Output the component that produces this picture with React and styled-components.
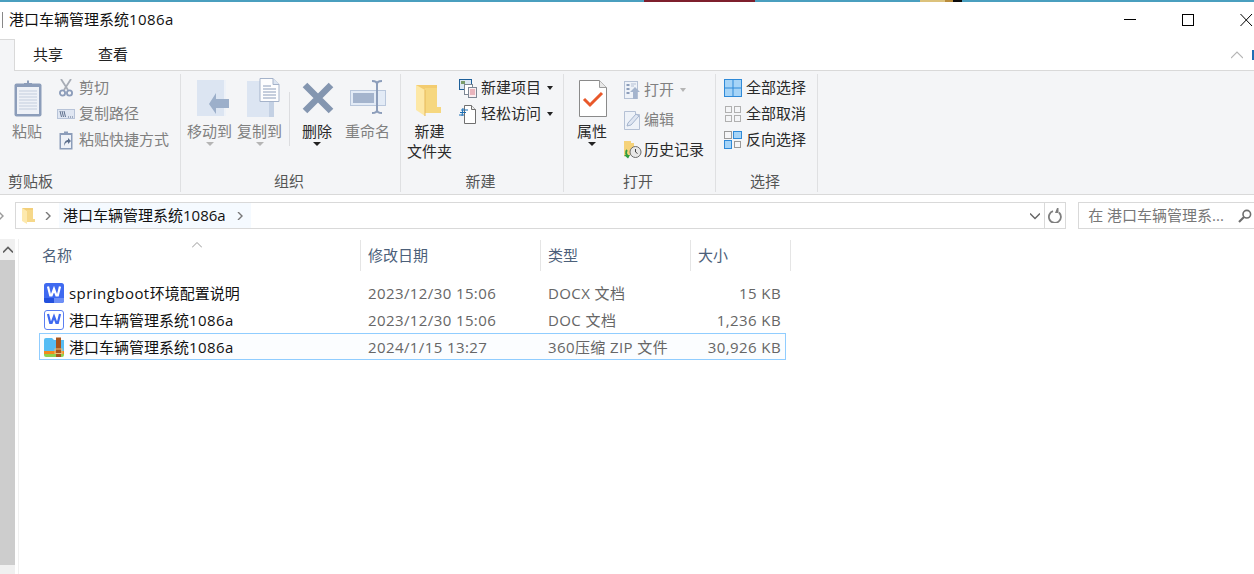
import React from "react";
import styled, { createGlobalStyle } from "styled-components";

const GlobalStyle = createGlobalStyle`
  html, body {
    margin: 0;
    padding: 0;
    background: #fff;
    overflow: hidden;
  }
  * {
    box-sizing: border-box;
  }
  svg {
    display: block;
    flex-shrink: 0;
  }
`;

const Window = styled.div`
  width: 1254px;
  height: 574px;
  overflow: hidden;
  background: #fff;
  font-family: "Open Sans", "Noto Sans CJK SC", sans-serif;
  font-size: 15px;
  color: #1a1a1a;
`;

const TopStrip = styled.div`
  display: flex;
  height: 2px;
`;

const StripSegment = styled.div`
  width: ${p => p.$width}px;
  flex-grow: ${p => (p.$grow ? 1 : 0)};
  background: ${p => p.$color};
`;

const TitleBar = styled.div`
  display: flex;
  align-items: center;
  justify-content: space-between;
  height: 36px;
  padding-left: 2px;
`;

const TitleLeft = styled.div`
  display: flex;
  align-items: center;
  gap: 7px;
`;

const TitleTick = styled.div`
  width: 1px;
  height: 16px;
  background: #888;
`;

const Title = styled.div`
  margin-top: -3px;
  margin-left: -1px;
  font-size: 15px;
  color: #111;
`;

const LatinRun = styled.span`
  letter-spacing: 0.45px;
`;

const WindowControls = styled.div`
  display: flex;
  align-items: center;
  gap: 46px;
  padding-right: 1px;
`;

const TabRow = styled.div`
  display: flex;
  align-items: flex-end;
  height: 33px;
  border-bottom: 1px solid #d9d9d9;
`;

const HomeTab = styled.div`
  width: 15px;
  height: 32px;
  margin-bottom: -1px;
  background: #f4f5f7;
  border-top: 1px solid #d9d9d9;
  border-right: 1px solid #d9d9d9;
`;

const Tab = styled.div`
  width: ${p => p.$width}px;
  height: 31px;
  line-height: 31px;
  padding-left: ${p => p.$pad}px;
  font-size: 15px;
  color: #222;
`;

const TabSpacer = styled.div`
  flex: 1;
  display: flex;
  align-items: center;
  justify-content: flex-end;
  height: 31px;
  gap: 9px;
`;

const HelpSliver = styled.div`
  width: 2px;
  height: 10px;
  background: #1f6fb5;
`;

const Ribbon = styled.div`
  display: flex;
  height: 124px;
  padding: 3px 0 2px;
  background: #f4f5f7;
  border-bottom: 1px solid #d9d9d9;
`;

const Group = styled.div`
  display: flex;
  flex-direction: column;
  width: ${p => p.$width}px;
  height: 118px;
  border-right: 1px solid #dfe0e2;
`;

const GroupBody = styled.div`
  flex: 1;
  display: flex;
  align-items: flex-start;
  padding-left: ${p => p.$pad}px;
  gap: ${p => p.$gap || 0}px;
`;

const GroupLabel = styled.div`
  height: 22px;
  line-height: 22px;
  padding-left: ${p => (p.$left ? 8 : 0)}px;
  padding-right: ${p => (p.$left ? 0 : 3)}px;
  text-align: ${p => (p.$left ? "left" : "center")};
  font-size: 15px;
  color: #555;
`;

const BigButton = styled.div`
  display: flex;
  flex-direction: column;
  align-items: center;
  width: ${p => p.$width}px;
  margin-right: ${p => p.$after || 0}px;
  color: ${p => (p.$off ? "#808080" : "#2a2a2a")};
  font-size: 15px;
  line-height: 20px;
  white-space: nowrap;
  text-align: center;
`;

const BigIcon = styled.div`
  display: flex;
  align-items: flex-start;
  justify-content: center;
  height: 47px;
  padding-top: ${p => p.$top || 0}px;
  margin-left: ${p => p.$shift || 0}px;
`;

const Caret = styled.div`
  width: 0;
  height: 0;
  margin-top: 1px;
  border-left: 4px solid transparent;
  border-right: 4px solid transparent;
  border-top: 4px solid ${p => (p.$off ? "#b5b5b5" : "#222")};
`;

const RibbonDivider = styled.div`
  width: 1px;
  height: 54px;
  margin: 18px 12px 0 7px;
  background: #dcdde0;
`;

const SmallStack = styled.div`
  display: flex;
  flex-direction: column;
  padding-top: 1px;
`;

const SmallAction = styled.div`
  display: flex;
  align-items: center;
  height: ${p => p.$height}px;
  font-size: 15px;
  white-space: nowrap;
  color: ${p => (p.$off ? "#808080" : "#2a2a2a")};
`;

const SmallLabel = styled.span`
  margin-top: -3px;
`;

const SmallIcon = styled.div`
  display: flex;
  align-items: center;
  width: ${p => p.$width}px;
  padding-left: ${p => p.$inset || 0}px;
`;

const InlineCaret = styled.div`
  width: 0;
  height: 0;
  margin-left: 6px;
  border-left: 3.5px solid transparent;
  border-right: 3.5px solid transparent;
  border-top: 4px solid ${p => (p.$off ? "#b5b5b5" : "#222")};
`;

const AddressRow = styled.div`
  display: flex;
  align-items: center;
  height: 44px;
  padding-bottom: 3px;
`;

const BackStub = styled.div`
  width: 15px;
  display: flex;
  margin-left: -3px;
  margin-right: 3px;
`;

const AddressBox = styled.div`
  display: flex;
  align-items: center;
  width: 1052px;
  height: 27px;
  padding-left: 6px;
  border: 1px solid #d9d9d9;
`;

const Crumbs = styled.div`
  flex: 1;
  display: flex;
  align-items: center;
`;

const CrumbArrow = styled.div`
  display: flex;
  justify-content: center;
  width: 24px;
  padding-left: 3px;
`;

const CrumbSegment = styled.div`
  display: flex;
  align-items: center;
  height: 25px;
  padding: 0 7px 0 4px;
  gap: 10px;
  background: #f5faff;
  font-size: 15px;
  color: #111;
`;

const AddressTools = styled.div`
  display: flex;
  align-items: center;
  height: 25px;
`;

const RefreshCell = styled.div`
  display: flex;
  align-items: center;
  justify-content: center;
  width: 21px;
  height: 25px;
  margin-left: 4px;
  border-left: 1px solid #d9d9d9;
`;

const SearchBox = styled.div`
  display: flex;
  align-items: center;
  justify-content: space-between;
  width: 176px;
  height: 27px;
  margin-left: 12px;
  padding: 0 2px 0 9px;
  border: 1px solid #d9d9d9;
  border-right: none;
  font-size: 15px;
  color: #777;
`;

const FileArea = styled.div`
  display: flex;
  height: 335px;
`;

const Scrollbar = styled.div`
  display: flex;
  flex-direction: column;
  width: 15px;
  background: #f0f0f0;
`;

const ScrollUp = styled.div`
  display: flex;
  align-items: center;
  justify-content: center;
  height: 21px;
`;

const ScrollThumb = styled.div`
  height: 305px;
  background: #cdcdcd;
`;

const FilePane = styled.div`
  flex: 1;
  margin-left: 3px;
  padding-left: 20px;
  border-left: 1px solid #f0f0f0;
`;

const HeaderRow = styled.div`
  position: relative;
  display: grid;
  grid-template-columns: 322px 180px 150px 100px;
  width: 752px;
  height: 32px;
  margin-top: 1px;
`;

const SortArrow = styled.div`
  position: absolute;
  left: 153px;
  top: 0;
`;

const HeaderCell = styled.div`
  height: 31px;
  line-height: 30px;
  padding-left: ${p => p.$pad}px;
  border-right: 1px solid #e5e5e5;
  font-size: 15px;
  color: #4c607a;
`;

const FileRows = styled.div`
  padding-top: 7px;
`;

const FileRow = styled.div`
  display: grid;
  grid-template-columns: 324px 180px 150px 1fr;
  align-items: center;
  width: 747px;
  height: 27px;
  padding: 0 4px;
  border: 1px solid ${p => (p.$selected ? "#90cdff" : "transparent")};
  background: ${p => (p.$selected ? "#fbfdff" : "transparent")};
`;

const NameCell = styled.div`
  display: flex;
  align-items: center;
  gap: 5px;
  font-size: 15px;
  color: #111;
`;

const MetaCell = styled.div`
  font-size: 15px;
  letter-spacing: 0.4px;
  color: #666;
  white-space: nowrap;
  text-align: ${p => (p.$right ? "right" : "left")};
`;

const Minimize = () => (
  <svg width="12" height="12" viewBox="0 0 12 12"><path d="M0 5.5h12" stroke="#000" fill="none" /></svg>
);
const Maximize = () => (
  <svg width="12" height="12" viewBox="0 0 12 12"><rect x="0.5" y="0.5" width="11" height="11" stroke="#000" fill="none" /></svg>
);
const CloseIcon = () => (
  <svg width="13" height="12" viewBox="0 0 13 12"><path d="M0.5 0l11.5 12M12 0L0.5 12" stroke="#000" fill="none" /></svg>
);
const Chevron = ({ dir = "right", size = 8, color = "#8a8a8a", width = 1.4 }) => {
  const paths = {
    right: "M2 0l4 4-4 4",
    down: "M0 2l4 4 4-4",
    up: "M0 6l4-4 4 4",
    left: "M6 0L2 4l4 4",
  };
  return (
    <svg width={size} height={size} viewBox="0 0 8 8">
      <path d={paths[dir]} stroke={color} strokeWidth={width} fill="none" />
    </svg>
  );
};

const PasteIcon = () => (
  <svg width="28" height="38" viewBox="0 0 28 38">
    <rect x="0.5" y="3.5" width="27" height="33" rx="2" fill="#8c9dba" />
    <rect x="3" y="7" width="22" height="27" fill="#eef1f7" />
    <path d="M5 11h18M5 14h18M5 17h18M5 20h18M5 23h18M5 26h18M5 29h18" stroke="#c3cddd" />
    <path d="M10 5V3h3V0.5h2V3h3v2z" fill="#8c9dba" />
  </svg>
);
const ScissorsIcon = () => (
  <svg width="14" height="18" viewBox="0 0 14 18">
    <path d="M2 0l7 11M12 0L5 11" stroke="#a8adb6" strokeWidth="1.8" fill="none" />
    <circle cx="3.5" cy="14" r="2.6" fill="none" stroke="#8c9dba" strokeWidth="1.8" />
    <circle cx="10.5" cy="14" r="2.6" fill="none" stroke="#8c9dba" strokeWidth="1.8" />
  </svg>
);
const CopyPathIcon = () => (
  <svg width="18" height="10" viewBox="0 0 18 10">
    <rect x="0.5" y="0.5" width="17" height="9" fill="#dfe6f2" stroke="#b7c3d8" />
    <path d="M3 2l1.5 6M5 2l1.5 6M7 2l1.5 6" stroke="#5d6f8d" fill="none" />
    <path d="M11 8h1M13 8h1M15 8h1" stroke="#5d6f8d" />
  </svg>
);
const ShortcutIcon = () => (
  <svg width="14" height="19" viewBox="0 0 14 19">
    <rect x="0.5" y="2" width="13" height="16.5" fill="#8c9dba" />
    <rect x="2" y="4" width="10" height="13" fill="#eef1f7" />
    <path d="M5 2V0.5h4V2z" fill="#8c9dba" />
    <path d="M5 15c0-4 2-6 4-6V7l3 3-3 3v-2c-1.500 0-3 1-4 4z" fill="#5d6f8d" />
  </svg>
);
const MoveToIcon = () => (
  <svg width="32" height="38" viewBox="0 0 32 38">
    <rect x="0" y="0" width="27" height="36" fill="#dce5f2" />
    <rect x="27" y="0" width="2" height="36" fill="#eef2f8" />
    <path d="M32 22H19v-6L12 27l7 10v-6h13z" transform="translate(0 -3)" fill="#9cafca" />
  </svg>
);
const CopyToIcon = () => (
  <svg width="33" height="40" viewBox="0 0 33 40">
    <rect x="0" y="3" width="27" height="36" fill="#dce5f2" />
    <rect x="22" y="24" width="5" height="15" fill="#c4d1e4" />
    <path d="M13 0.500h13l6 6v17H13z" fill="#fdfdfe" stroke="#a5b3ca" />
    <path d="M26 .5v6h6" fill="#dce5f2" stroke="#a5b3ca" />
    <path d="M16 8h8M16 11h13M16 14h13M16 17h13M16 20h13" stroke="#8c9dba" />
  </svg>
);
const DeleteIcon = () => (
  <svg width="32" height="32" viewBox="0 0 32 32">
    <path d="M3 3l26 26M29 3L3 29" stroke="#8496b0" strokeWidth="6.500" fill="none" />
  </svg>
);
const RenameIcon = () => (
  <svg width="36" height="34" viewBox="0 0 36 34">
    <rect x="0.500" y="10.500" width="35" height="15" fill="#e3ebf6" stroke="#b9c7dc" />
    <rect x="3" y="13" width="21" height="10" fill="#a4b4cd" />
    <path d="M22 1c3 0 5 1 5 3v26c0 2-2 3-5 3M32 1c-3 0-5 1-5 3v26c0 2 2 3 5 3" stroke="#8c9dba" strokeWidth="2" fill="none" />
  </svg>
);
const NewFolderIcon = () => (
  <svg width="25" height="35" viewBox="0 0 25 35">
    <path d="M0 3h21v27H9z" fill="#f3cc70" />
    <path d="M9 6h12v19h4v6H9z" fill="#f6d77f" />
    <path d="M0 3l9 5v26L0 28z" fill="#fde8a6" />
    <path d="M9 8v26" stroke="#e5b95b" />
  </svg>
);
const NewItemIcon = () => (
  <svg width="18" height="19" viewBox="0 0 18 19">
    <rect x="0.500" y="0.500" width="12" height="10" fill="#dbe7f3" stroke="#1d5f99" />
    <rect x="2" y="2" width="4" height="3" fill="#7a9b6a" />
    <rect x="5.500" y="5.500" width="8" height="10" fill="#fff" stroke="#7d8794" />
    <rect x="9.500" y="8.500" width="8" height="10" fill="#fbeef0" stroke="#7d8794" />
    <path d="M11 11h5M11 13h5M11 15h5" stroke="#d77c8a" />
  </svg>
);
const EasyAccessIcon = () => (
  <svg width="17" height="19" viewBox="0 0 17 19">
    <path d="M5.500 .500h7l4 4v14h-11z" fill="#fff" stroke="#6f6f6f" />
    <path d="M12.500 .500v4h4" fill="#eee" stroke="#6f6f6f" />
    <path d="M2 5h7M1 7.500h6M0 10h5M4 3l-1 8" stroke="#1c6fb5" fill="none" />
  </svg>
);
const PropertiesIcon = () => (
  <svg width="28" height="37" viewBox="0 0 28 37">
    <path d="M.500 .500h20l7 7v29h-27z" fill="#fff" stroke="#8a8a8a" />
    <path d="M20.500 .500v7h7" fill="#e8e8e8" stroke="#9a9a9a" />
    <path d="M5 19l6 6L23 13" stroke="#e8582a" strokeWidth="3" fill="none" />
  </svg>
);
const OpenIcon = () => (
  <svg width="16" height="19" viewBox="0 0 16 19">
    <rect x="0.500" y="0.500" width="13" height="17" fill="#eef2f8" stroke="#b5c1d5" />
    <path d="M2.500 3h3v2h-3zM2.500 7h3v2h-3zM2.500 11h3v2h-3z" fill="#8c9dba" />
    <path d="M7 3h5M7 5h3" stroke="#b5c1d5" />
    <path d="M6 11l5-5 5 5h-3v7H9v-7z" fill="#a4b4cd" />
  </svg>
);
const EditIcon = () => (
  <svg width="16" height="19" viewBox="0 0 16 19">
    <path d="M.500 .500h11v3l4 0v15H.500z" fill="#eef2f8" stroke="#b5c1d5" />
    <path d="M3 15l1-3L12 3l3 2-8 9z" fill="#dfe6f2" stroke="#a4b4cd" />
  </svg>
);
const HistoryIcon = () => (
  <svg width="18" height="18" viewBox="0 0 18 18">
    <path d="M0 0h7v2h3v12H2L0 16z" fill="#f5d27a" />
    <circle cx="11.500" cy="11" r="5.500" fill="#e8e8e8" stroke="#6d6d6d" />
    <path d="M11.500 8v3l2 1.500" stroke="#444" fill="none" />
    <path d="M3 9a4 4 0 0 0 2 6.500" stroke="#2f9e3f" strokeWidth="2" fill="none" />
    <path d="M0 14h6l-2 3.500z" fill="#2f9e3f" />
  </svg>
);
const SelectAllIcon = () => (
  <svg width="18" height="18" viewBox="0 0 18 18">
    <rect x="0.500" y="0.500" width="17" height="17" fill="#a6d4f7" stroke="#2f8ad8" />
    <path d="M9 0v18M0 9h18" stroke="#2f8ad8" />
  </svg>
);
const SelectNoneIcon = () => (
  <svg width="18" height="17" viewBox="0 0 18 17">
    <rect x="1.500" y="0.500" width="6" height="6" fill="none" stroke="#b0b0b0" />
    <rect x="10.500" y="0.500" width="6" height="6" fill="none" stroke="#b0b0b0" />
    <rect x="1.500" y="9.500" width="6" height="6" fill="none" stroke="#b0b0b0" />
    <rect x="10.500" y="9.500" width="6" height="6" fill="none" stroke="#b0b0b0" />
  </svg>
);
const InvertIcon = () => (
  <svg width="18" height="18" viewBox="0 0 18 18">
    <rect x="0.500" y="0.500" width="7" height="7" fill="none" stroke="#9a9a9a" />
    <rect x="9.500" y="0.500" width="8" height="7" fill="#a6d4f7" stroke="#2f8ad8" />
    <rect x="0.500" y="9.500" width="7" height="8" fill="#a6d4f7" stroke="#2f8ad8" />
    <rect x="10.500" y="10.500" width="6" height="6" fill="none" stroke="#9a9a9a" />
  </svg>
);
const CrumbFolder = () => (
  <svg width="13" height="18" viewBox="0 0 13 18">
    <path d="M0 1h11v13H4z" fill="#f3cf79" />
    <path d="M5 3h6v9h2v3H5z" fill="#f6d88a" />
    <path d="M0 1l5 3v13l-5-3z" fill="#fde9ae" />
  </svg>
);
const RefreshIcon = () => (
  <svg width="14" height="15" viewBox="0 0 14 15">
    <path d="M5 2.200A6 6 0 1 0 11 3.500" stroke="#7e7e7e" strokeWidth="1.800" fill="none" transform="translate(0 1)" />
    <path d="M9 0h1.500v5H7z" fill="#7e7e7e" />
  </svg>
);
const SearchIcon = () => (
  <svg width="14" height="14" viewBox="0 0 14 14">
    <circle cx="8.800" cy="5.200" r="3.800" fill="none" stroke="#6d6d6d" strokeWidth="1.600" />
    <path d="M6 8L1 13" stroke="#6d6d6d" strokeWidth="2.200" />
  </svg>
);
const WordFilledIcon = () => (
  <svg width="20" height="20" viewBox="0 0 20 20">
    <rect width="20" height="20" rx="2.500" fill="#3f6af0" />
    <path d="M0 15h10v5H2.500A2.500 2.500 0 0 1 0 17.500z" fill="#2350dd" />
    <path d="M10 15h10v2.500a2.500 2.500 0 0 1-2.500 2.500H10z" fill="#6d8ff6" />
    <path d="M4 3.500l2.200 9h1.400L10 6l2.400 6.500h1.400l2.200-9" stroke="#fff" strokeWidth="2.200" fill="none" />
  </svg>
);
const WordOutlineIcon = () => (
  <svg width="20" height="20" viewBox="0 0 20 20">
    <rect x="0.500" y="0.500" width="19" height="19" rx="2.500" fill="#fff" stroke="#5b7ff0" />
    <path d="M4 4l2.200 9h1.400L10 6.500l2.400 6.500h1.400L16 4" stroke="#3f6af0" strokeWidth="2.200" fill="none" />
  </svg>
);
const ZipIcon = () => (
  <svg width="20" height="20" viewBox="0 0 20 20">
    <path d="M0 3a2 2 0 0 1 2-2h6l2 2h10v11H0z" fill="#56bdf4" />
    <rect y="14" width="20" height="3" fill="#f28a1c" />
    <path d="M0 17h20v1a2 2 0 0 1-2 2H2a2 2 0 0 1-2-2z" fill="#8fd04f" />
    <rect x="12" y="0.500" width="5" height="19.500" fill="#a9551c" />
    <rect x="11" y="12" width="7" height="4.500" fill="none" stroke="#e9c27b" />
  </svg>
);

const files = [
  { latin: "springboot", rest: "环境配置说明", date: "2023/12/30 15:06", type: "DOCX 文档", size: "15 KB", Icon: WordFilledIcon },
  { rest: "港口车辆管理系统", latinEnd: "1086a", date: "2023/12/30 15:06", type: "DOC 文档", size: "1,236 KB", Icon: WordOutlineIcon },
  { rest: "港口车辆管理系统", latinEnd: "1086a", date: "2024/1/15 13:27", type: "360压缩 ZIP 文件", size: "30,926 KB", Icon: ZipIcon, selected: true },
];

export default function App() {
  return (
    <Window>
      <GlobalStyle />
      <TopStrip>
        <StripSegment $width={644} $color="#4a9fbf" />
        <StripSegment $width={111} $color="#7e1f2c" />
        <StripSegment $width={165} $color="#4a9fbf" />
        <StripSegment $width={25} $color="#dcc27c" />
        <StripSegment $width={8} $color="#b98c3c" />
        <StripSegment $width={9} $color="#0c0c0c" />
        <StripSegment $grow $color="#4a9fbf" />
      </TopStrip>

      <TitleBar>
        <TitleLeft>
          <TitleTick />
          <Title>港口车辆管理系统<LatinRun>1086a</LatinRun></Title>
        </TitleLeft>
        <WindowControls>
          <Minimize />
          <Maximize />
          <CloseIcon />
        </WindowControls>
      </TitleBar>

      <TabRow>
        <HomeTab />
        <Tab $width={65} $pad={18}>共享</Tab>
        <Tab $width={65} $pad={18}>查看</Tab>
        <TabSpacer>
          <Chevron dir="up" size={12} color="#b5b5b5" width={0.8} />
          <HelpSliver />
        </TabSpacer>
      </TabRow>

      <Ribbon>
        <Group $width={181}>
          <GroupBody $pad={8} $gap={11}>
            <BigButton $width={38} $off>
              <BigIcon $top={6} $shift={2}><PasteIcon /></BigIcon>
              粘贴
            </BigButton>
            <SmallStack>
              <SmallAction $height={26} $off><SmallIcon $width={22} $inset={2}><ScissorsIcon /></SmallIcon><SmallLabel>剪切</SmallLabel></SmallAction>
              <SmallAction $height={26} $off><SmallIcon $width={22}><CopyPathIcon /></SmallIcon><SmallLabel>复制路径</SmallLabel></SmallAction>
              <SmallAction $height={26} $off><SmallIcon $width={22} $inset={2}><ShortcutIcon /></SmallIcon><SmallLabel>粘贴快捷方式</SmallLabel></SmallAction>
            </SmallStack>
          </GroupBody>
          <GroupLabel $left>剪贴板</GroupLabel>
        </Group>

        <Group $width={220}>
          <GroupBody $pad={6}>
            <BigButton $width={45} $after={5} $off>
              <BigIcon $top={6} $shift={7}><MoveToIcon /></BigIcon>
              移动到
              <Caret $off />
            </BigButton>
            <BigButton $width={45} $off>
              <BigIcon $top={4} $shift={7}><CopyToIcon /></BigIcon>
              复制到
              <Caret $off />
            </BigButton>
            <RibbonDivider />
            <BigButton $width={30} $after={13}>
              <BigIcon $top={8} $shift={2}><DeleteIcon /></BigIcon>
              删除
              <Caret />
            </BigButton>
            <BigButton $width={45} $off>
              <BigIcon $top={6}><RenameIcon /></BigIcon>
              重命名
            </BigButton>
          </GroupBody>
          <GroupLabel>组织</GroupLabel>
        </Group>

        <Group $width={163}>
          <GroupBody $pad={6} $gap={7}>
            <BigButton $width={45}>
              <BigIcon $top={8} $shift={-2}><NewFolderIcon /></BigIcon>
              新建<br />文件夹
            </BigButton>
            <SmallStack>
              <SmallAction $height={26}><SmallIcon $width={22}><NewItemIcon /></SmallIcon><SmallLabel>新建项目</SmallLabel><InlineCaret /></SmallAction>
              <SmallAction $height={26}><SmallIcon $width={22}><EasyAccessIcon /></SmallIcon><SmallLabel>轻松访问</SmallLabel><InlineCaret /></SmallAction>
            </SmallStack>
          </GroupBody>
          <GroupLabel>新建</GroupLabel>
        </Group>

        <Group $width={152}>
          <GroupBody $pad={13} $gap={17}>
            <BigButton $width={30}>
              <BigIcon $top={6} $shift={2}><PropertiesIcon /></BigIcon>
              属性
              <Caret />
            </BigButton>
            <SmallStack>
              <SmallAction $height={30} $off><SmallIcon $width={20}><OpenIcon /></SmallIcon><SmallLabel>打开</SmallLabel><InlineCaret $off /></SmallAction>
              <SmallAction $height={30} $off><SmallIcon $width={20}><EditIcon /></SmallIcon><SmallLabel>编辑</SmallLabel></SmallAction>
              <SmallAction $height={30}><SmallIcon $width={20}><HistoryIcon /></SmallIcon><SmallLabel>历史记录</SmallLabel></SmallAction>
            </SmallStack>
          </GroupBody>
          <GroupLabel>打开</GroupLabel>
        </Group>

        <Group $width={102}>
          <GroupBody $pad={8}>
            <SmallStack>
              <SmallAction $height={26}><SmallIcon $width={22}><SelectAllIcon /></SmallIcon><SmallLabel>全部选择</SmallLabel></SmallAction>
              <SmallAction $height={26}><SmallIcon $width={22}><SelectNoneIcon /></SmallIcon><SmallLabel>全部取消</SmallLabel></SmallAction>
              <SmallAction $height={26}><SmallIcon $width={22}><InvertIcon /></SmallIcon><SmallLabel>反向选择</SmallLabel></SmallAction>
            </SmallStack>
          </GroupBody>
          <GroupLabel>选择</GroupLabel>
        </Group>
      </Ribbon>

      <AddressRow>
        <BackStub><Chevron dir="right" size={8} color="#9a9a9a" /></BackStub>
        <AddressBox>
          <Crumbs>
            <CrumbFolder />
            <CrumbArrow><Chevron dir="right" size={8} color="#777" /></CrumbArrow>
            <CrumbSegment>
              <SmallLabel>港口车辆管理系统1086a</SmallLabel>
              <Chevron dir="right" size={8} color="#777" />
            </CrumbSegment>
          </Crumbs>
          <AddressTools>
            <Chevron dir="down" size={10} color="#666" width={1.2} />
            <RefreshCell><RefreshIcon /></RefreshCell>
          </AddressTools>
        </AddressBox>
        <SearchBox>
          <SmallLabel>在 港口车辆管理系...</SmallLabel>
          <SearchIcon />
        </SearchBox>
      </AddressRow>

      <FileArea>
        <Scrollbar>
          <ScrollUp><Chevron dir="up" size={10} color="#606060" width={1.3} /></ScrollUp>
          <ScrollThumb />
        </Scrollbar>
        <FilePane>
          <HeaderRow>
            <HeaderCell $pad={3}>名称</HeaderCell>
            <HeaderCell $pad={7}>修改日期</HeaderCell>
            <HeaderCell $pad={7}>类型</HeaderCell>
            <HeaderCell $pad={7}>大小</HeaderCell>
            <SortArrow><Chevron dir="up" size={10} color="#999" width={0.8} /></SortArrow>
          </HeaderRow>
          <FileRows>
            {files.map(file => (
              <FileRow key={file.type} $selected={file.selected}>
                <NameCell>
                  <file.Icon />
                  <span>
                    <LatinRun>{file.latin}</LatinRun>
                    {file.rest}
                    <LatinRun>{file.latinEnd}</LatinRun>
                  </span>
                </NameCell>
                <MetaCell>{file.date}</MetaCell>
                <MetaCell>{file.type}</MetaCell>
                <MetaCell $right>{file.size}</MetaCell>
              </FileRow>
            ))}
          </FileRows>
        </FilePane>
      </FileArea>
    </Window>
  );
}
